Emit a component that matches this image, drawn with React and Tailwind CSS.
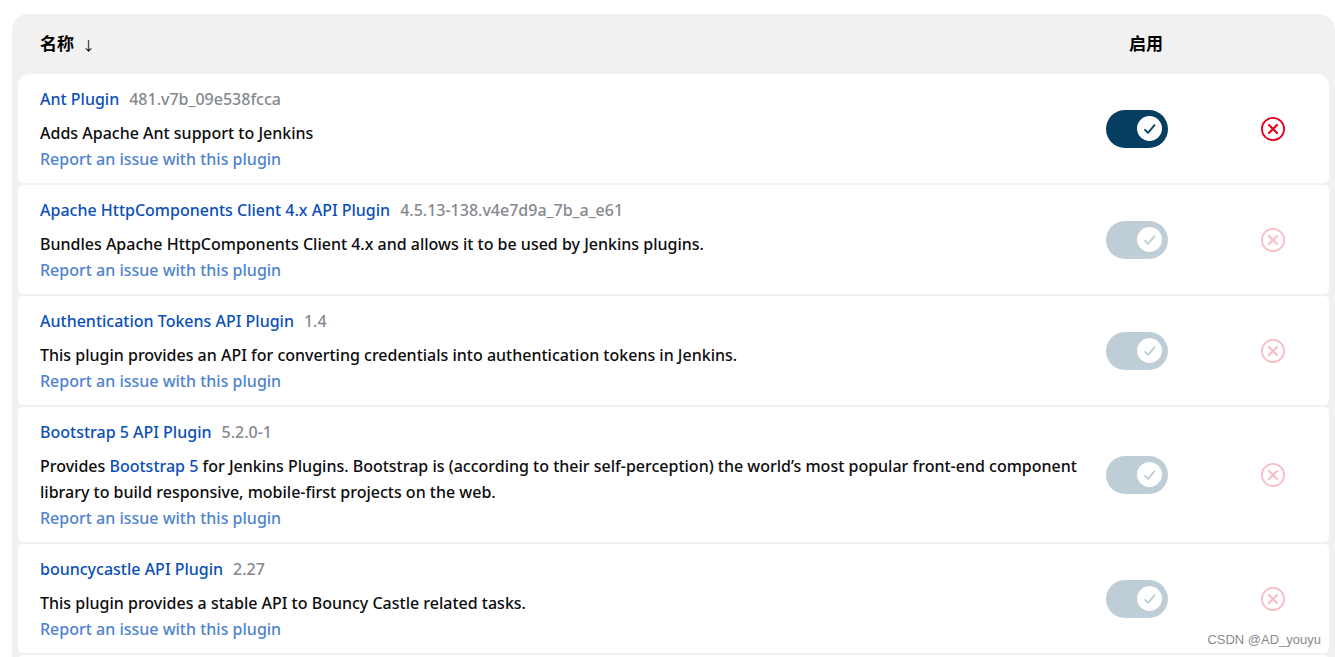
import React, { useState } from 'react';

const PLUGINS = [
    {
        id: 'ant',
        name: 'Ant Plugin',
        version: '481.v7b_09e538fcca',
        description: 'Adds Apache Ant support to Jenkins',
        locked: false
    },
    {
        id: 'apache-httpcomponents-client-4-api',
        name: 'Apache HttpComponents Client 4.x API Plugin',
        version: '4.5.13-138.v4e7d9a_7b_a_e61',
        description: 'Bundles Apache HttpComponents Client 4.x and allows it to be used by Jenkins plugins.',
        locked: true
    },
    {
        id: 'authentication-tokens',
        name: 'Authentication Tokens API Plugin',
        version: '1.4',
        description: 'This plugin provides an API for converting credentials into authentication tokens in Jenkins.',
        locked: true
    },
    {
        id: 'bootstrap5-api',
        name: 'Bootstrap 5 API Plugin',
        version: '5.2.0-1',
        description: (
            <>
                Provides <a href="#bootstrap" className="text-[#0b4fb8]">Bootstrap 5</a> for Jenkins Plugins. Bootstrap is
                (according to their self-perception) the world’s most popular front-end component library to build
                responsive, mobile-first projects on the web.
            </>
        ),
        locked: true
    },
    {
        id: 'bouncycastle-api',
        name: 'bouncycastle API Plugin',
        version: '2.27',
        description: 'This plugin provides a stable API to Bouncy Castle related tasks.',
        locked: true
    }
];

function Toggle({ label, disabled }) {
    const [checked, setChecked] = useState(true);

    return (
        <label className={`relative flex h-[38px] w-[62px] items-center rounded-full px-[6px] ${checked ? 'justify-end bg-[#063e61]' : 'justify-start bg-[#8a9aa5]'} ${disabled ? 'opacity-25' : 'cursor-pointer'}`}>
            <input
                type="checkbox"
                checked={checked}
                disabled={disabled}
                onChange={e => setChecked(e.target.checked)}
                aria-label={label}
                className="absolute inset-0 appearance-none rounded-full"
            />
            <span className="flex h-[25px] w-[25px] items-center justify-center rounded-full bg-white">
                {checked && (
                    <svg viewBox="0 0 12 10" className="h-[10px] w-[12px]" fill="none" stroke="#063e61" strokeWidth="1.8" strokeLinecap="round" strokeLinejoin="round">
                        <path d="M1 5.8 4 8.8 10.5 1.2" />
                    </svg>
                )}
            </span>
        </label>
    );
}

function UninstallButton({ label, disabled }) {
    return (
        <button
            type="button"
            disabled={disabled}
            aria-label={label}
            className={`mx-auto block h-[24px] w-[24px] ${disabled ? 'opacity-25' : 'cursor-pointer'}`}
        >
            <svg viewBox="0 0 24 24" className="h-full w-full" fill="none" stroke="#e6001f" strokeLinecap="round">
                <circle cx="12" cy="12" r="11.1" strokeWidth="1.8" />
                <path d="M8 8l8 8M16 8l-8 8" strokeWidth="2.2" />
            </svg>
        </button>
    );
}

function PluginRow({ plugin, first }) {
    return (
        <tr>
            <td className={`rounded-l-[5px] bg-white pt-3 pb-[11px] pl-[22px] ${first ? 'rounded-tl-[12px]' : ''}`}>
                <div className="mb-2">
                    <a href={`#${plugin.id}`} className="text-[#0b4fb8]">{plugin.name}</a>
                    <span className="ml-[10px] text-[#85888f]">{plugin.version}</span>
                </div>
                <p>{plugin.description}</p>
                <a href={`#${plugin.id}-issue`} className="block w-fit text-[#4f83d0]">
                    Report an issue with this plugin
                </a>
            </td>
            <td className="bg-white pl-3">
                <Toggle label={plugin.name} disabled={plugin.locked} />
            </td>
            <td className={`rounded-r-[5px] bg-white ${first ? 'rounded-tr-[12px]' : ''}`}>
                <UninstallButton label={plugin.name} disabled={plugin.locked} />
            </td>
        </tr>
    );
}

export default function App() {
    return (
        <main className="relative h-screen overflow-hidden bg-white pt-[14px] pl-3 font-['Noto_Sans','Noto_Sans_CJK_SC',sans-serif] text-[16px] leading-[26px] font-medium text-[#0c0c0e]">
            <div className="rounded-[16px] bg-[#f1f1f1] px-[6px]">
                <table className="w-full table-fixed border-separate border-spacing-x-0 border-spacing-y-[2px]">
                    <colgroup>
                        <col />
                        <col className="w-[123px]" />
                        <col className="w-[112px]" />
                    </colgroup>
                    <thead className="text-left text-[17px] font-bold text-black">
                        <tr>
                            <th className="h-[56px] pl-[22px]">
                                名称<span className="ml-2 font-['Noto_Sans_CJK_SC',sans-serif] text-[13px] font-normal">↓</span>
                            </th>
                            <th className="pl-[35px]">启用</th>
                            <th></th>
                        </tr>
                    </thead>
                    <tbody>
                        {PLUGINS.map((plugin, idx) => (
                            <PluginRow key={plugin.id} plugin={plugin} first={idx === 0} />
                        ))}
                        <tr>
                            <td colSpan={3} className="h-[109px] rounded-[5px] bg-white"></td>
                        </tr>
                    </tbody>
                </table>
            </div>
            <span className="absolute right-[14px] bottom-2 font-['Liberation_Sans',sans-serif] text-[13px] leading-[18px] font-normal text-[#8a8a8a]">
                CSDN @AD_youyu
            </span>
        </main>
    );
}
